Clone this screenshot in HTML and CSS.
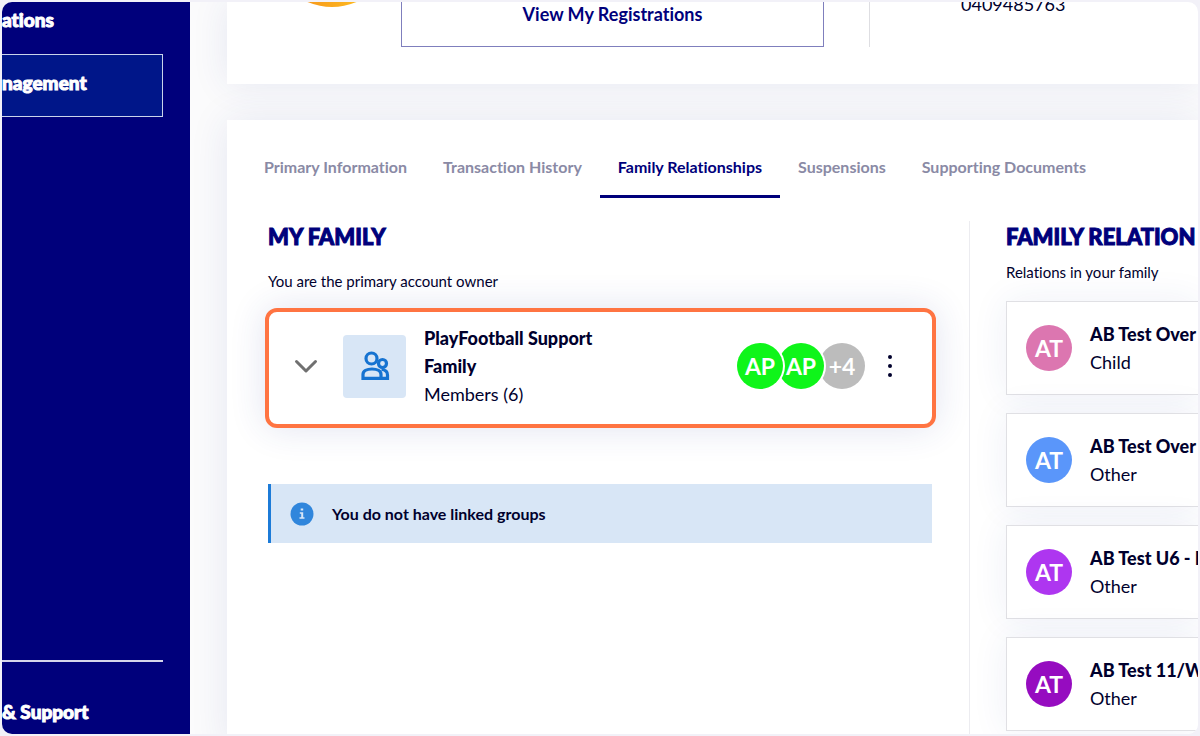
FILE: index.html
```html
<!DOCTYPE html>
<html lang="en">
<head>
  <meta charset="UTF-8" />
  <meta name="viewport" content="width=device-width, initial-scale=1.0" />
  <title>My Family</title>
  <link rel="stylesheet" href="styles.css">
</head>
<body>
  <div class="app">
    <nav class="sidebar">
      <a class="nav-link" href="#">ations</a>
      <a class="nav-link active" href="#">nagement</a>
      <div class="sidebar-footer">
        <a class="nav-link" href="#">&amp; Support</a>
      </div>
    </nav>

    <main class="content">
      <section class="card profile">
        <svg class="logo" width="126" height="6" viewBox="0 0 126 6">
          <defs>
            <linearGradient id="sun" x1="0" x2="1">
              <stop offset="0.3" stop-color="#f79a1c" />
              <stop offset="0.7" stop-color="#fdb81f" />
            </linearGradient>
          </defs>
          <circle cx="63" cy="-57" r="62" fill="url(#sun)" />
        </svg>
        <button class="view-btn">View My Registrations</button>
        <div class="phone">0409485763</div>
      </section>

      <section class="card details">
        <div class="tabs">
          <button class="tab">Primary Information</button>
          <button class="tab">Transaction History</button>
          <button class="tab active">Family Relationships</button>
          <button class="tab">Suspensions</button>
          <button class="tab">Supporting Documents</button>
        </div>

        <div class="columns">
          <div class="family">
            <h2>My Family</h2>
            <p class="owner">You are the primary account owner</p>

            <div class="family-card">
              <button class="icon-btn" aria-label="Expand">
                <svg width="24" height="24" viewBox="0 0 24 24" fill="none" stroke="#707070" stroke-width="3" stroke-linecap="round" stroke-linejoin="round">
                  <path d="M2.500 7.500 12 17l9.500-9.500" />
                </svg>
              </button>
              <div class="tile">
                <svg width="30" height="30" viewBox="0 0 30 30" fill="none" stroke="#1673d1" stroke-width="3.200">
                  <circle cx="11.500" cy="7.500" r="5.500" />
                  <path d="M3 27.300v-3.800c0-3.600 4-5.500 9-5.500s9 1.900 9 5.500v3.800z" />
                  <circle cx="22.500" cy="12.500" r="4" />
                  <path d="M21.500 18.500c4.500.3 6 2.300 6 5.500v3.300H21" />
                </svg>
              </div>
              <div class="info family-info">
                <div class="name">PlayFootball Support Family</div>
                <div>Members (6)</div>
              </div>
              <div class="avatars">
                <span class="avatar green">AP</span>
                <span class="avatar green">AP</span>
                <span class="avatar grey">+4</span>
              </div>
              <button class="icon-btn" aria-label="More">
                <svg width="24" height="24" viewBox="0 0 24 24" fill="#00002d">
                  <circle cx="12" cy="3" r="2" />
                  <circle cx="12" cy="12" r="2" />
                  <circle cx="12" cy="21" r="2" />
                </svg>
              </button>
            </div>

            <div class="notice">
              <svg width="24" height="24" viewBox="0 0 24 24">
                <circle cx="12" cy="12" r="11.500" fill="#3086dc" />
                <path d="M10.700 6.500h2.500v2h-2.500zM9.800 10.300h3.400v5h1.300v1.500H9.500v-1.500h1.700v-3.500H9.800z" fill="#d8e6f6" />
              </svg>
              <span>You do not have linked groups</span>
            </div>
          </div>

          <div class="relations">
            <h2>Family Relation</h2>
            <p>Relations in your family</p>
            <div class="relation">
              <span class="avatar pink">AT</span>
              <div class="info"><div class="name">AB Test Over</div><div>Child</div></div>
            </div>
            <div class="relation">
              <span class="avatar blue">AT</span>
              <div class="info"><div class="name">AB Test Over</div><div>Other</div></div>
            </div>
            <div class="relation">
              <span class="avatar violet">AT</span>
              <div class="info"><div class="name">AB Test U6 - M</div><div>Other</div></div>
            </div>
            <div class="relation">
              <span class="avatar purple">AT</span>
              <div class="info"><div class="name">AB Test 11/W</div><div>Other</div></div>
            </div>
          </div>
        </div>
      </section>
    </main>
  </div>
</body>
</html>
```
FILE: styles.css
```css
* {
  box-sizing: border-box;
  margin: 0;
  padding: 0;
}

body {
  font-family: Lato, sans-serif;
  font-size: 16px;
  font-variant-ligatures: none;
  color: #00002d;
  background: #f2f1f8;
  padding: 2px;
}

button {
  font: inherit;
  font-variant-ligatures: none;
  color: inherit;
  background: none;
  border: none;
  cursor: pointer;
}

.app {
  display: flex;
  height: calc(100vh - 4px);
  border-radius: 10px;
  overflow: hidden;
  background: #fbfbfc;
}

/* Sidebar */
.sidebar {
  flex: 0 0 188px;
  display: flex;
  flex-direction: column;
  padding-right: 27px;
  background: #00007b;
}

.nav-link {
  display: block;
  padding: 6px 0 22px;
  color: white;
  font-size: 19px;
  font-weight: 900;
  line-height: 24px;
  text-decoration: none;
  -webkit-text-stroke: 1px white;
}

.nav-link.active {
  padding: 16px 0 21px;
  background: #001689;
  border: 1px solid #c9d3ea;
  border-left: none;
}

.sidebar-footer {
  margin-top: auto;
  padding-top: 32px;
  border-top: 2px solid #d5d5ea;
}

.sidebar-footer .nav-link {
  padding-bottom: 10px;
}

/* Main area */
.content {
  flex: 1;
  min-width: 0;
  display: flex;
  flex-direction: column;
  gap: 36px;
  padding-left: 37px;
  overflow: hidden;
}

.card {
  background: white;
  box-shadow: 0 0 36px rgba(40, 60, 150, 0.1);
}

.profile {
  flex: none;
  display: flex;
  align-items: flex-start;
  padding: 0 0 37px 42px;
}

.view-btn {
  flex: 0 1 423px;
  height: 45px;
  margin-left: 6px;
  padding-bottom: 20px;
  color: #00007b;
  font-size: 18px;
  font-weight: bold;
  border: 1px solid #7f7fbd;
  border-top: none;
}

.phone {
  height: 45px;
  margin-left: 45px;
  padding-left: 91px;
  border-left: 1px solid #dedee2;
  font-size: 18px;
  line-height: 4px;
}

.details {
  flex: 1 0 auto;
  padding: 18px 0 0 19px;
}

.tabs {
  display: flex;
}

.tab {
  height: 60px;
  padding: 0 18px;
  color: #8a8aa5;
  font-weight: bold;
  white-space: nowrap;
  border-bottom: 3px solid transparent;
}

.tab.active {
  color: #00007b;
  border-color: #00007b;
}

.columns {
  display: flex;
  padding: 23px 0 0 22px;
}

h2 {
  color: #00007b;
  font-size: 22px;
  font-weight: 900;
  line-height: 32px;
  text-transform: uppercase;
  white-space: nowrap;
  -webkit-text-stroke: 1px #00007b;
}

.family {
  flex: 1;
  padding-right: 37px;
  border-right: 1px solid #ececf0;
}

.owner {
  margin-top: 18px;
  font-size: 15px;
  line-height: 20px;
}

.family-card {
  display: flex;
  align-items: center;
  height: 120px;
  margin: 17px -4px 0 -3px;
  padding: 0 30px 4px 25px;
  background: white;
  border: 4px solid #ff7442;
  border-radius: 12px;
  box-shadow: 0 0 36px rgba(40, 60, 150, 0.14);
}

.icon-btn {
  height: 24px;
}

.tile {
  display: flex;
  align-items: center;
  justify-content: center;
  width: 63px;
  height: 63px;
  margin: 0 18px 0 25px;
  background: #d8e6f6;
  border-radius: 4px;
}

.info {
  font-size: 18px;
  line-height: 28px;
  white-space: nowrap;
}

.family-info {
  width: 200px;
  white-space: normal;
}

.name {
  font-weight: 900;
}

.avatars {
  display: flex;
  margin: 0 13px 0 auto;
}

.avatar {
  display: flex;
  align-items: center;
  justify-content: center;
  flex: none;
  width: 46px;
  height: 46px;
  border-radius: 50%;
  color: white;
  font-size: 23px;
  font-weight: bold;
}

.avatars .avatar {
  position: relative;
  box-shadow: 0 0 0 2px white;
}

.avatars .avatar + .avatar {
  margin-left: -5px;
}

.avatars .avatar:nth-child(1) { z-index: 3; }
.avatars .avatar:nth-child(2) { z-index: 2; }

.green { background: #0ff51a; }
.grey { background: #bcbcbc; }
.pink { background: #dc76b0; }
.blue { background: #5a96fa; }
.violet { background: #ae36f0; }
.purple { background: #960cc0; }

.notice {
  display: flex;
  align-items: center;
  gap: 18px;
  height: 59px;
  margin-top: 56px;
  padding-left: 19px;
  background: #d8e6f6;
  border-left: 3px solid #1c7bd8;
  font-weight: bold;
}

.relations {
  flex: 0 0 228px;
  min-width: 0;
  padding-left: 36px;
}

.relations p {
  margin: 9px 0 19px;
  font-size: 15px;
  line-height: 20px;
}

.relation {
  display: flex;
  align-items: center;
  gap: 18px;
  height: 94px;
  margin-bottom: 18px;
  padding-left: 19px;
  background: white;
  border: 1px solid #e0e0e4;
  border-right: none;
  box-shadow: 0 0 36px rgba(40, 60, 150, 0.08);
}
```
